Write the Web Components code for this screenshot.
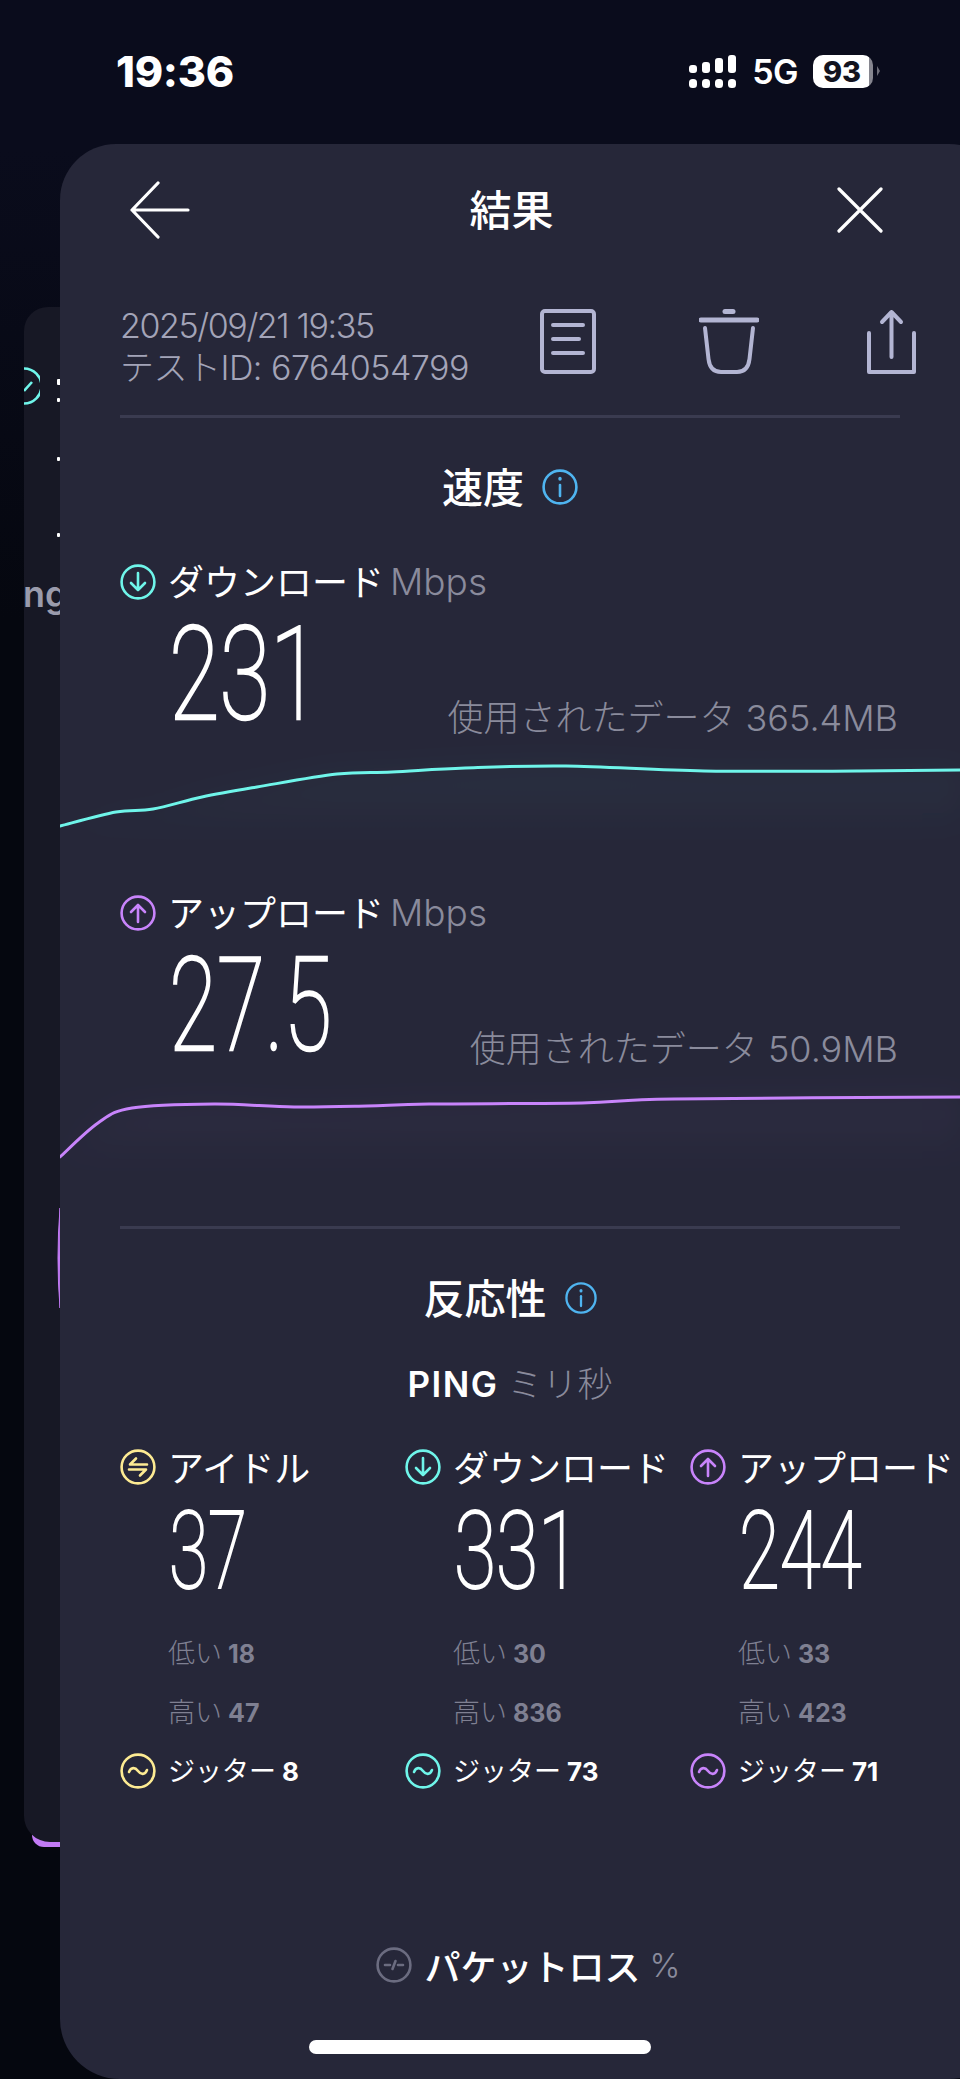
<!DOCTYPE html>
<html lang="ja">
<head>
<meta charset="utf-8">
<title>結果</title>
<style>
    html, body { margin: 0; padding: 0; overflow: hidden; background: #05060f; }
    body { width: 960px; height: 2079px; position: relative; background: linear-gradient(180deg, #0a0c1c 0, #0a0c1c 150px, #05070f 620px); font-family: Inter, "Noto Sans CJK JP", sans-serif; color: #fff; }
</style>
</head>
<body>
<back-card></back-card>
<status-bar></status-bar>
<result-sheet>
    <sheet-header>結果</sheet-header>
    <test-meta date="2025/09/21 19:35" test-id="テストID: 6764054799"></test-meta>

    <section-title size="36">速度</section-title>
    <speed-metric kind="down" color="#6ff5ea" label="ダウンロード" value="231" scale=".71" data="使用されたデータ 365.4MB"
        points="0,86 56,72 93,69 142,57 197,47 277,34 332,32 405,28 506,26 644,31 797,31 900,30"></speed-metric>
    <speed-metric kind="up" color="#c884fb" label="アップロード" value="27.5" scale=".675" data="使用されたデータ 50.9MB" class="second"
        points="0,86 38,52 72,37 154,33 234,36 307,35 369,33 522,32 614,28 900,26"></speed-metric>

    <sheet-divider></sheet-divider>
    <section-title size="32">反応性</section-title>
    <ping-heading></ping-heading>
    <ping-grid>
        <ping-column kind="idle" color="#fdeb93" label="アイドル" value="37" scale=".66" low="18" high="47" jitter="8"></ping-column>
        <ping-column kind="down" color="#6ff5ea" label="ダウンロード" value="331" scale=".71" low="30" high="836" jitter="73"></ping-column>
        <ping-column kind="up" color="#c884fb" label="アップロード" value="244" scale=".69" low="33" high="423" jitter="71"></ping-column>
    </ping-grid>
    <packet-loss></packet-loss>
</result-sheet>
<home-bar></home-bar>

<script>
// round badge used next to every metric
function badge(kind, color, size = 36) {
    const inner = {
        down: '<path d="M18 9v17M11 19l7 7 7-7"/>',
        up: '<path d="M18 27V10M11 17l7-7 7 7"/>',
        idle: '<path d="M27 15.5H10l6-6M9 20.5h17l-6 6"/>',
        jitter: '<path d="M9 19c2-5 6-5 9-1s7 4 9-1"/>',
        loss: '<path d="M9 18h5M22 18h5M16.5 22l3-8"/>'
    }[kind];
    return `<svg width="${size}" height="${size}" viewBox="0 0 36 36" fill="none" stroke="${color}" stroke-width="2.6" stroke-linecap="round" stroke-linejoin="round" style="flex:none;display:block">
        <circle cx="18" cy="18" r="16.4"/>${inner}</svg>`;
}

class BackCard extends HTMLElement {
    constructor() {
        super();
        this.attachShadow({ mode: 'open' });
        this.shadowRoot.innerHTML = `
            <style>
                :host { display: block; position: absolute; left: 24px; top: 307px; width: 60px; height: 1535px; z-index: 0; }
                .sliver { position: absolute; left: 8px; top: 1500px; width: 80px; height: 40px; background: #c27af5; border-radius: 0 0 0 12px; }
                .card { position: absolute; inset: 0; width: 120px; background: #171825; border-radius: 24px 0 0 26px; overflow: hidden; }
                .ng { position: absolute; left: 0; top: 265px; font: 600 36px/44px Inter, sans-serif; color: #9a9bac; margin-left: -1px; }
                .dot { position: absolute; background: #fff; width: 3px; height: 4px; left: 33px; border-radius: 1px; }
                svg { position: absolute; left: 0; }
                .teal { top: 60px; }
                .arc { left: 32px; top: 901px; }
            </style>
            <div class="sliver"></div>
            <div class="card">
                <svg class="teal" width="16" height="38" viewBox="0 0 16 38" fill="none" stroke="#6ff5ea" stroke-width="2.6"><path d="M0 1.500a17 17 0 0 1 0 35M0 24l8-9"/></svg>
                <span class="dot" style="top:72px;width:4px;height:6px"></span>
                <span class="dot" style="top:91px"></span>
                <span class="dot" style="top:150px"></span>
                <span class="dot" style="top:226px"></span>
                <span class="ng">ng</span>
                <svg class="arc" width="4" height="100" viewBox="0 0 4 100" fill="#c27af5"><path d="M4 0Q0 50 4 100Q3 50 4 0Z" stroke="#c27af5" stroke-width="1"/></svg>
            </div>
        `;
    }
}

class StatusBar extends HTMLElement {
    constructor() {
        super();
        this.attachShadow({ mode: 'open' });
        this.shadowRoot.innerHTML = `
            <style>
                :host { display: flex; justify-content: space-between; box-sizing: border-box; height: 144px; padding: 47px 87px 0 116px; position: relative; z-index: 2; color: #fff; font-family: Inter, sans-serif; }
                .time { font-size: 43px; line-height: 48px; font-weight: 800; letter-spacing: -0.3px; }
                .right { display: flex; align-items: flex-start; padding-top: 8px; }
                .net { font-size: 34px; line-height: 33px; font-weight: 600; margin: 0 15px 0 16px; letter-spacing: -0.5px; }
                .batt { position: relative; width: 60px; height: 33px; border-radius: 10px; background: linear-gradient(90deg, #fff 93%, #86868f 93%); color: #12131f; font-size: 29px; line-height: 33px; font-weight: 800; text-align: center; box-sizing: border-box; padding-right: 2px; }
                .batt::after { content: ''; position: absolute; left: 64px; top: 11px; border-left: 3px solid #6d6d78; border-top: 5px solid transparent; border-bottom: 5px solid transparent; }
            </style>
            <span class="time">19:36</span>
            <div class="right">
                <svg width="47" height="33" viewBox="0 0 47 33" fill="#fff">
                    <rect x="0" y="10" width="8" height="8" rx="3"/><rect x="13" y="7" width="8" height="11" rx="3"/><rect x="26" y="3" width="8" height="15" rx="3"/><rect x="39" y="0" width="8" height="18" rx="3"/>
                    <rect x="0" y="24" width="8" height="9" rx="3.5"/><rect x="13" y="24" width="8" height="9" rx="3.5"/><rect x="26" y="24" width="8" height="9" rx="3.5"/><rect x="39" y="24" width="8" height="9" rx="3.5"/>
                </svg>
                <span class="net">5G</span>
                <span class="batt">93</span>
            </div>
        `;
    }
}

class ResultSheet extends HTMLElement {
    constructor() {
        super();
        this.attachShadow({ mode: 'open' });
        this.shadowRoot.innerHTML = `
            <style>
                :host { display: block; box-sizing: border-box; position: relative; z-index: 1; margin-left: 60px; width: 945px; padding-right: 45px; height: 1935px; background: #262739; border-radius: 56px 56px 56px 60px; }
                ::slotted(.second) { margin-top: 35px; }
            </style>
            <slot></slot>
        `;
    }
}

class SheetHeader extends HTMLElement {
    constructor() {
        super();
        this.attachShadow({ mode: 'open' });
        this.shadowRoot.innerHTML = `
            <style>
                :host { display: flex; align-items: center; justify-content: space-between; height: 132px; padding: 0 77px 0 70px; }
                .title { font: 500 42px/48px "Noto Sans CJK JP", sans-serif; padding-bottom: 5px; margin-left: -4px; }
                svg { display: block; }
            </style>
            <svg width="60" height="58" viewBox="0 0 60 58" fill="none" stroke="#fff" stroke-width="3.2" stroke-linecap="round" stroke-linejoin="round"><path d="M28 2L2 29l26 27M2 29h56"/></svg>
            <span class="title"><slot></slot></span>
            <svg width="46" height="46" viewBox="0 0 46 46" fill="none" stroke="#fff" stroke-width="3.2" stroke-linecap="round"><path d="M2 2l42 42M44 2L2 44"/></svg>
        `;
    }
}

class TestMeta extends HTMLElement {
    connectedCallback() {
        this.attachShadow({ mode: 'open' });
        this.shadowRoot.innerHTML = `
            <style>
                :host { display: flex; align-items: flex-start; box-sizing: border-box; height: 142px; margin: 0 60px; padding-top: 29px; border-bottom: 3px solid #3a3b50; color: #a3a4b8; font: 300 34px/42px Inter, "Noto Sans CJK JP", sans-serif; }
                .text { flex: none; width: 420px; white-space: nowrap; }
                .date { letter-spacing: -1.4px; }
                .id { letter-spacing: -0.5px; }
                svg { display: block; flex: none; margin-top: 4px; }
            </style>
            <div class="text"><div class="date">${this.getAttribute('date')}</div><div class="id">${this.getAttribute('test-id')}</div></div>
            <svg width="56" height="65" viewBox="0 0 56 65" fill="none" stroke="#b3b5d3" stroke-width="4" stroke-linecap="round" stroke-linejoin="round">
                <rect x="2" y="2" width="52" height="61" rx="3"/><path d="M13 16h30M13 30h26M13 44h30"/>
            </svg>
            <svg style="margin-left:103px" width="60" height="65" viewBox="0 0 60 65" fill="none" stroke="#b3b5d3" stroke-width="4" stroke-linecap="round" stroke-linejoin="round">
                <path d="M2 11h56" stroke-width="5"/><path d="M26 2.500h8" stroke-width="5"/><path d="M6 19l3.500 31Q11 63 22 63h16q11 0 12.500-13L54 19"/>
            </svg>
            <svg style="margin-left:108px" width="50" height="65" viewBox="0 0 50 65" fill="none" stroke="#b3b5d3" stroke-width="4" stroke-linecap="round" stroke-linejoin="round">
                <path d="M2 24v39h45V24M24.500 48V3M15 13l9.500-10L34 13"/>
            </svg>
        `;
    }
}

class SectionTitle extends HTMLElement {
    connectedCallback() {
        const s = Number(this.getAttribute('size'));
        this.attachShadow({ mode: 'open' });
        this.shadowRoot.innerHTML = `
            <style>
                :host { display: flex; align-items: center; justify-content: center; gap: 18px; height: 40px; margin-top: 49px; font: 500 41px/40px "Noto Sans CJK JP", sans-serif; color: #fff; }
                span { padding-bottom: 5px; }
                svg { display: block; }
            </style>
            <span><slot></slot></span>
            <svg width="${s}" height="${s}" viewBox="0 0 36 36" fill="none" stroke="#4fb4f0" stroke-width="2.6" stroke-linecap="round"><circle cx="18" cy="18" r="16.4"/><path d="M18 16v11"/><path d="M18 9.500v.5" stroke-width="3.400"/></svg>
        `;
    }
}

class SpeedMetric extends HTMLElement {
    connectedCallback() {
        const a = n => this.getAttribute(n);
        this.attachShadow({ mode: 'open' });
        this.shadowRoot.innerHTML = `
            <style>
                :host { display: block; margin-top: 57px; font-family: Inter, "Noto Sans CJK JP", sans-serif; }
                .label { display: flex; align-items: center; height: 36px; margin-left: 60px; gap: 12px; font: 400 36px/36px "Noto Sans CJK JP", sans-serif; white-space: nowrap; }
                .label .name { padding-bottom: 4px; }
                .unit { font: 300 37px/36px Inter, sans-serif; color: #8a8b9c; margin-left: -6px; }
                .row { display: flex; justify-content: space-between; align-items: flex-end; height: 94px; margin: 28px 62px 0 109px; }
                .num { display: inline-block; font: 100 130px/94px Roboto, sans-serif; -webkit-text-stroke: 2.6px #fff; transform: scaleX(${a('scale')}); transform-origin: left center; white-space: nowrap; }
                .data { font: 300 36px/36px Inter, "Noto Sans CJK JP", sans-serif; color: #8a8b9c; margin-bottom: -14px; white-space: nowrap; }
                speed-graph { margin-top: 18px; }
            </style>
            <div class="label">${badge(a('kind'), a('color'))}<span class="name">${a('label')}</span><span class="unit">Mbps</span></div>
            <div class="row"><span class="num">${a('value')}</span><span class="data">${a('data')}</span></div>
            <speed-graph color="${a('color')}" points="${a('points')}"></speed-graph>
        `;
    }
}

class SpeedGraph extends HTMLElement {
    connectedCallback() {
        const color = this.getAttribute('color');
        const pts = this.getAttribute('points').split(' ').map(p => p.split(',').map(Number));
        // catmull-rom through the sampled points
        let d = `M${pts[0][0]} ${pts[0][1]}`;
        for (let i = 0; i < pts.length - 1; i++) {
            const p0 = pts[i - 1] || pts[i], p1 = pts[i], p2 = pts[i + 1], p3 = pts[i + 2] || p2;
            const c1 = [p1[0] + (p2[0] - p0[0]) / 6, p1[1] + (p2[1] - p0[1]) / 6];
            const c2 = [p2[0] - (p3[0] - p1[0]) / 6, p2[1] - (p3[1] - p1[1]) / 6];
            d += `C${c1[0].toFixed(1)} ${c1[1].toFixed(1)} ${c2[0].toFixed(1)} ${c2[1].toFixed(1)} ${p2[0]} ${p2[1]}`;
        }
        const id = 'g' + color.slice(1);
        this.attachShadow({ mode: 'open' });
        this.shadowRoot.innerHTML = `
            <style>
                :host { display: block; height: 120px; }
                svg { display: block; overflow: visible; }
            </style>
            <svg width="900" height="120" viewBox="0 0 900 120" fill="none">
                <defs>
                    <linearGradient id="${id}" gradientUnits="userSpaceOnUse" x1="0" y1="20" x2="0" y2="95"><stop offset="0" stop-color="${color}" stop-opacity=".05"/><stop offset="1" stop-color="${color}" stop-opacity="0"/></linearGradient>
                    <filter id="${id}b" x="-5%" y="-40%" width="110%" height="180%"><feGaussianBlur stdDeviation="14"/></filter>
                    <clipPath id="${id}c"><rect x="0" y="-20" width="900" height="150"/></clipPath>
                </defs>
                <g clip-path="url(#${id}c)">
                    <path d="${d}L900 110L0 110Z" fill="url(#${id})" filter="url(#${id}b)"/>
                    <path d="${d}" stroke="${color}" stroke-width="3" stroke-linecap="round"/>
                </g>
            </svg>
        `;
    }
}

class SheetDivider extends HTMLElement {
    constructor() {
        super();
        this.attachShadow({ mode: 'open' });
        this.shadowRoot.innerHTML = `<style>:host { display: block; height: 3px; margin: 35px 60px 0; background: #3a3b50; }</style>`;
    }
}

class PingHeading extends HTMLElement {
    constructor() {
        super();
        this.attachShadow({ mode: 'open' });
        this.shadowRoot.innerHTML = `
            <style>
                :host { display: flex; justify-content: center; align-items: baseline; gap: 9px; height: 40px; margin-top: 44px; font: 600 35px/40px Inter, sans-serif; letter-spacing: 1.5px; color: #fff; }
                .unit { font: 300 35px/40px "Noto Sans CJK JP", sans-serif; letter-spacing: 0; color: #8a8b9c; }
            </style>
            <span>PING</span><span class="unit">ミリ秒</span>
        `;
    }
}

class PingGrid extends HTMLElement {
    constructor() {
        super();
        this.attachShadow({ mode: 'open' });
        this.shadowRoot.innerHTML = `
            <style>:host { display: grid; grid-template-columns: 285px 285px 1fr; margin: 47px 0 0 60px; }</style>
            <slot></slot>
        `;
    }
}

class PingColumn extends HTMLElement {
    connectedCallback() {
        const a = n => this.getAttribute(n);
        this.attachShadow({ mode: 'open' });
        this.shadowRoot.innerHTML = `
            <style>
                :host { display: block; font-family: Inter, "Noto Sans CJK JP", sans-serif; white-space: nowrap; }
                .label { display: flex; align-items: center; gap: 12px; height: 36px; font: 400 36px/36px "Noto Sans CJK JP", sans-serif; }
                .label span { padding-bottom: 2px; }
                .num { display: block; height: 78px; margin: 27px 0 0 49px; font: 100 108px/78px Roboto, sans-serif; -webkit-text-stroke: 2.2px #fff; transform: scaleX(${a('scale')}); transform-origin: left center; }
                .stat { height: 30px; margin-left: 48px; font: 300 27px/30px "Noto Sans CJK JP", sans-serif; color: #7f8092; }
                .stat b { font: 700 25px/30px Inter, sans-serif; }
                .low { margin-top: 47px; }
                .high { margin-top: 29px; }
                .jitter { display: flex; align-items: center; gap: 12px; height: 36px; margin-top: 27px; font: 400 27px/36px "Noto Sans CJK JP", sans-serif; }
                .jitter b { font: 700 26px/36px Inter, sans-serif; margin-left: 6px; }
            </style>
            <div class="label">${badge(a('kind'), a('color'))}<span>${a('label')}</span></div>
            <span class="num">${a('value')}</span>
            <div class="stat low">低い <b>${a('low')}</b></div>
            <div class="stat high">高い <b>${a('high')}</b></div>
            <div class="jitter">${badge('jitter', a('color'))}<span>ジッター<b>${a('jitter')}</b></span></div>
        `;
    }
}

class PacketLoss extends HTMLElement {
    constructor() {
        super();
        this.attachShadow({ mode: 'open' });
        this.shadowRoot.innerHTML = `
            <style>
                :host { display: flex; align-items: center; justify-content: center; gap: 13px; height: 36px; margin-top: 158px; padding-left: 36px; font: 500 36px/36px "Noto Sans CJK JP", sans-serif; }
                .pct { font: 300 33px/36px Inter, sans-serif; color: #8a8b9c; margin-left: -4px; }
            </style>
            ${badge('loss', '#6b6c80')}<span>パケットロス</span><span class="pct">%</span>
        `;
    }
}

class HomeBar extends HTMLElement {
    constructor() {
        super();
        this.attachShadow({ mode: 'open' });
        this.shadowRoot.innerHTML = `<style>:host { display: block; position: absolute; z-index: 3; left: 309px; top: 2040px; width: 342px; height: 14px; border-radius: 7px; background: #fff; }</style>`;
    }
}

customElements.define('back-card', BackCard);
customElements.define('status-bar', StatusBar);
customElements.define('result-sheet', ResultSheet);
customElements.define('sheet-header', SheetHeader);
customElements.define('test-meta', TestMeta);
customElements.define('section-title', SectionTitle);
customElements.define('speed-metric', SpeedMetric);
customElements.define('speed-graph', SpeedGraph);
customElements.define('sheet-divider', SheetDivider);
customElements.define('ping-heading', PingHeading);
customElements.define('ping-grid', PingGrid);
customElements.define('ping-column', PingColumn);
customElements.define('packet-loss', PacketLoss);
customElements.define('home-bar', HomeBar);
</script>
</body>
</html>
